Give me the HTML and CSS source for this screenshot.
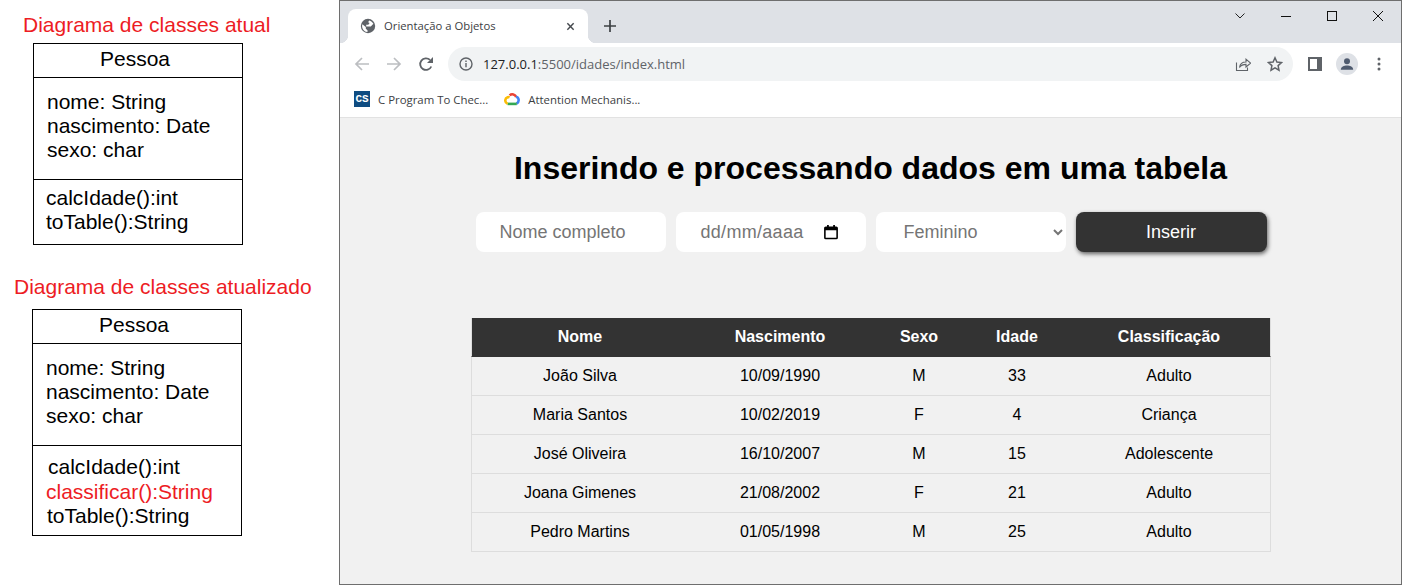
FILE: index.html
```html
<!DOCTYPE html>
<html lang="pt-BR">
<head>
    <meta charset="utf-8">
    <title>Orientação a Objetos</title>
    <link rel="stylesheet" href="styles.css">
</head>

<body>
    <aside class="diagrams">
        <h2 class="diagram-title first">Diagrama de classes atual</h2>
        <div class="uml first">
            <div class="uml-name">Pessoa</div>
            <div class="uml-attrs">
                <div>nome: String</div>
                <div>nascimento: Date</div>
                <div>sexo: char</div>
            </div>
            <div class="uml-methods">
                <div>calcIdade():int</div>
                <div>toTable():String</div>
            </div>
        </div>

        <h2 class="diagram-title second">Diagrama de classes atualizado</h2>
        <div class="uml second">
            <div class="uml-name">Pessoa</div>
            <div class="uml-attrs">
                <div>nome: String</div>
                <div>nascimento: Date</div>
                <div>sexo: char</div>
            </div>
            <div class="uml-methods updated">
                <div class="m-calc">calcIdade():int</div>
                <div class="m-new">classificar():String</div>
                <div class="m-table">toTable():String</div>
            </div>
        </div>
    </aside>

    <div class="browser">
        <div class="tabstrip">
            <div class="tab">
                <svg class="favicon" viewBox="0 0 16 16">
                    <circle cx="8" cy="8" r="7.2" fill="#5f6368"/>
                    <path d="M2.300 6.300 5.800 9v1.800l1.700 1.500v1.800C5 13.800 3.100 12.300 2.300 9.700c-.3-1.200-.3-2.300 0-3.400z" fill="#fff"/>
                    <path d="M9.200 2.400c1.900.5 3.300 1.700 4.200 3.400L10.800 8.600H6.200V6.800h2.100l1.300-1.700-1.500-.8z" fill="#fff"/>
                </svg>
                <span class="tab-title">Orientação a Objetos</span>
                <svg class="tab-close" viewBox="0 0 10 10"><path d="M1.500 1.500l7 7M8.500 1.500l-7 7" stroke="#45494e" stroke-width="1.600" fill="none"/></svg>
            </div>
            <div class="new-tab">
                <svg viewBox="0 0 12 12" width="12" height="12"><path d="M6 0v12M0 6h12" stroke="#3c4043" stroke-width="1.700" fill="none"/></svg>
            </div>
            <div class="window-controls">
                <div class="win-btn"><svg viewBox="0 0 10 6" width="10" height="6"><path d="M.5.500 5 5 9.500.500" stroke="#222" fill="none"/></svg></div>
                <div class="win-btn"><svg viewBox="0 0 10 10" width="10" height="10"><path d="M0 5.500h10" stroke="#111" fill="none"/></svg></div>
                <div class="win-btn"><svg viewBox="0 0 10 10" width="10" height="10"><rect x=".5" y=".5" width="9" height="9" stroke="#111" fill="none"/></svg></div>
                <div class="win-btn"><svg viewBox="0 0 10 10" width="10" height="10"><path d="M0 0l10 10M10 0 0 10" stroke="#111" fill="none"/></svg></div>
            </div>
        </div>

        <div class="toolbar">
            <div class="tool-btn"><svg viewBox="0 0 16 16" width="16" height="16"><path d="M15 8H2M8 2 2 8l6 6" stroke="#bcbec1" stroke-width="1.700" fill="none"/></svg></div>
            <div class="tool-btn"><svg viewBox="0 0 16 16" width="16" height="16"><path d="M1 8h13M8 2l6 6-6 6" stroke="#bcbec1" stroke-width="1.700" fill="none"/></svg></div>
            <div class="tool-btn"><svg viewBox="0 0 16 16" width="16" height="16"><path d="M13.300 10.500A5.800 5.800 0 1 1 12 3.900" stroke="#5f6368" stroke-width="1.800" fill="none"/><path d="M15 1v6H9z" fill="#5f6368"/></svg></div>
            <div class="omnibox">
                <svg class="info" viewBox="0 0 14 14" width="14" height="14"><circle cx="7" cy="7" r="6" stroke="#5f6368" stroke-width="1.400" fill="none"/><path d="M6.300 6h1.400v4.300H6.300zM6.300 3.500h1.400v1.400H6.300z" fill="#5f6368"/></svg>
                <span class="url"><span class="url-host">127.0.0.1</span>:5500/idades/index.html</span>
                <div class="omni-btn"><svg viewBox="0 0 16 16" width="16" height="16"><path d="M1.500 6.500v8h11v-3" stroke="#5f6368" stroke-width="1.100" fill="none"/><path d="M4.500 11.500c.5-3.500 3-5.500 6.500-5.500V3.200l4.500 3.900-4.500 3.900V8.400c-2.700 0-4.900.8-6.500 3.100z" stroke="#5f6368" stroke-width="1.100" fill="none"/></svg></div>
                <div class="omni-btn"><svg viewBox="0 0 16 16" width="16" height="16"><path d="M8 1.800l1.900 4.200 4.600.5-3.400 3.100.9 4.600L8 11.900l-4 2.300.9-4.600L1.500 6.500 6.100 6z" stroke="#5f6368" stroke-width="1.500" fill="none"/></svg></div>
            </div>
            <div class="tool-btn side-panel"><svg viewBox="0 0 14 14" width="14" height="14"><path d="M0 0h14v14H0z" fill="#5f6368"/><path d="M2 2h7v10H2z" fill="#fff"/></svg></div>
            <div class="tool-btn">
                <div class="avatar">
                    <svg viewBox="0 0 14 14" width="14" height="14"><circle cx="7" cy="4.300" r="3" fill="#4f5b6f"/><path d="M.8 12.800c0-3 3.300-4.200 6.200-4.200s6.200 1.200 6.200 4.200z" fill="#4f5b6f"/></svg>
                </div>
            </div>
            <div class="tool-btn"><svg viewBox="0 0 4 14" width="4" height="14"><circle cx="2" cy="2" r="1.500" fill="#5f6368"/><circle cx="2" cy="7" r="1.500" fill="#5f6368"/><circle cx="2" cy="12" r="1.500" fill="#5f6368"/></svg></div>
        </div>

        <div class="bookmarks">
            <div class="bookmark first">
                <span class="cs-icon">CS</span>
                <span>C Program To Chec...</span>
            </div>
            <div class="bookmark">
                <svg viewBox="0 0 16 14" width="16" height="14">
                    <path d="M5.600 3.400A4.100 4.100 0 0 1 12.200 5" stroke="#ea4335" stroke-width="2.600" fill="none"/>
                    <path d="M12 4.800c2.900.6 3.900 4.800.6 6.900" stroke="#4285f4" stroke-width="2.600" fill="none"/>
                    <path d="M3.500 11.900h9.300" stroke="#34a853" stroke-width="2.600" fill="none"/>
                    <path d="M3.600 11.900C.5 10.700.500 6.300 3.600 5.300c.7-.2 1.300-.2 2 .1" stroke="#fbbc05" stroke-width="2.600" fill="none"/>
                </svg>
                <span>Attention Mechanis...</span>
            </div>
        </div>

        <main class="content">
            <h1 class="header">Inserindo e processando dados em uma tabela</h1>

            <form class="person-form">
                <input class="field" type="text" placeholder="Nome completo">
                <div class="field date-field">
                    <span>dd/mm/aaaa</span>
                    <svg viewBox="0 0 16 18" width="14" height="16"><path d="M1 4.500a1 1 0 0 1 1-1h12a1 1 0 0 1 1 1v11a1 1 0 0 1-1 1H2a1 1 0 0 1-1-1z" stroke="#000" stroke-width="1.800" fill="none"/><path d="M1 4h14v3H1zM3.500 1h2v3h-2zM10.500 1h2v3h-2z" fill="#000"/></svg>
                </div>
                <select class="field sex-field">
                    <option>Feminino</option>
                    <option>Masculino</option>
                </select>
                <button class="insert-btn" type="button">Inserir</button>
            </form>

            <table id="people-table">
                <thead>
                    <tr>
                        <td class="col-name">Nome</td>
                        <td class="col-birth">Nascimento</td>
                        <td class="col-sex">Sexo</td>
                        <td class="col-age">Idade</td>
                        <td class="col-class">Classificação</td>
                    </tr>
                </thead>
                <tbody>
                    <tr><td>João Silva</td><td>10/09/1990</td><td>M</td><td>33</td><td>Adulto</td></tr>
                    <tr><td>Maria Santos</td><td>10/02/2019</td><td>F</td><td>4</td><td>Criança</td></tr>
                    <tr><td>José Oliveira</td><td>16/10/2007</td><td>M</td><td>15</td><td>Adolescente</td></tr>
                    <tr><td>Joana Gimenes</td><td>21/08/2002</td><td>F</td><td>21</td><td>Adulto</td></tr>
                    <tr><td>Pedro Martins</td><td>01/05/1998</td><td>M</td><td>25</td><td>Adulto</td></tr>
                </tbody>
            </table>
        </main>
    </div>
</body>
</html>
```

FILE: styles.css
```css
* {
    box-sizing: border-box;
}

html, body {
    height: 100%;
}

body {
    display: flex;
    margin: 0;
    overflow: hidden;
    background: #fff;
    font-family: "Liberation Sans", Arial, sans-serif;
    color: #000;
}

/* diagrams on the left */
.diagrams {
    flex: 0 0 339px;
    padding-top: 13px;
    font-size: 21px;
}

.diagram-title {
    margin: 0;
    font-size: 21px;
    font-weight: normal;
    line-height: 23px;
    color: #ed1c24;
}
.diagram-title.first {
    padding-left: 23px;
}
.diagram-title.second {
    margin-top: 30px;
    padding-left: 14px;
}

.uml {
    width: 210px;
    margin-top: 7px;
    border: 1px solid #000;
    line-height: 24px;
}
.uml.first {
    margin-left: 33px;
}
.uml.second {
    margin-left: 32px;
    margin-top: 11px;
}

.uml-name {
    height: 34px;
    padding: 3px 6px 0 0;
    text-align: center;
    border-bottom: 1px solid #000;
}

.uml-attrs {
    height: 102px;
    padding: 12px 0 0 13px;
    border-bottom: 1px solid #000;
}

.uml-methods {
    height: 64px;
    padding: 6px 0 0 12px;
}
.uml-methods.updated {
    height: 89px;
    padding: 9px 0 0 0;
}
.m-calc {
    padding-left: 15px;
}
.m-new {
    padding-left: 13px;
    margin-top: 1px;
    color: #ed1c24;
}
.m-table {
    padding-left: 14px;
}

/* browser window */
.browser {
    flex: 1;
    display: flex;
    flex-direction: column;
    min-width: 0;
    border: 1px solid #6e6e6e;
    font-family: "Open Sans", "Liberation Sans", sans-serif;
}

.tabstrip {
    display: flex;
    flex: 0 0 42px;
    padding-left: 8px;
    background: #dee1e6;
}

.tab {
    position: relative;
    display: flex;
    align-items: center;
    width: 240px;
    height: 34px;
    margin-top: 8px;
    padding: 0 12px;
    background: #fff;
    border-radius: 8px 8px 0 0;
}
.tab::before,
.tab::after {
    content: "";
    position: absolute;
    bottom: 0;
    width: 8px;
    height: 8px;
}
.tab::before {
    left: -8px;
    background: radial-gradient(circle at 0 0, #dee1e6 8px, #fff 8.5px);
}
.tab::after {
    right: -8px;
    background: radial-gradient(circle at 100% 0, #dee1e6 8px, #fff 8.5px);
}

.favicon {
    flex: none;
    width: 16px;
    height: 16px;
}

.tab-title {
    flex: 1;
    margin: 0 0 2px 8px;
    font-size: 11.3px;
    color: #3c4043;
    white-space: nowrap;
}

.tab-close {
    flex: none;
    width: 9px;
    height: 9px;
    margin-right: 1px;
}

.new-tab {
    display: flex;
    align-items: center;
    justify-content: center;
    width: 28px;
    height: 34px;
    margin: 8px 0 0 8px;
}

.window-controls {
    display: flex;
    margin-left: auto;
}

.win-btn {
    display: flex;
    align-items: center;
    justify-content: center;
    width: 46px;
    height: 30px;
}

.toolbar {
    display: flex;
    flex: 0 0 38px;
    padding: 4px 6px 0;
    background: #fff;
}

.tool-btn {
    display: flex;
    align-items: center;
    justify-content: center;
    flex: none;
    width: 32px;
    height: 34px;
}
.tool-btn.side-panel {
    margin-left: 6px;
}

.avatar {
    display: flex;
    align-items: center;
    justify-content: center;
    width: 22px;
    height: 22px;
    border-radius: 50%;
    background: #dee1e6;
}

.omnibox {
    display: flex;
    align-items: center;
    flex: 1;
    height: 34px;
    margin-left: 6px;
    padding: 0 2px 0 11px;
    border-radius: 17px;
    background: #f1f3f4;
}

.info {
    flex: none;
}

.url {
    flex: 1;
    margin-left: 10px;
    font-size: 13px;
    color: #5f6368;
    white-space: nowrap;
}
.url-host {
    color: #202124;
}

.omni-btn {
    display: flex;
    align-items: center;
    justify-content: center;
    width: 32px;
    height: 32px;
}

.bookmarks {
    display: flex;
    align-items: center;
    flex: 0 0 37px;
    padding-left: 14px;
    background: #fff;
    border-bottom: 1px solid #e2e2e2;
    font-size: 11.4px;
    color: #3c4043;
}

.bookmark {
    display: flex;
    align-items: center;
    gap: 8px;
}
.bookmark.first {
    margin-right: 16px;
}

.cs-icon {
    display: flex;
    align-items: center;
    justify-content: center;
    width: 16px;
    height: 16px;
    background: #0f4c81;
    color: #fff;
    font-family: "Liberation Mono", monospace;
    font-size: 11px;
    font-weight: bold;
}

/* page inside the browser */
.content {
    flex: 1;
    display: flex;
    flex-direction: column;
    align-items: center;
    padding-top: 32px;
    background: #f1f1f1;
    font-family: "Liberation Sans", Arial, sans-serif;
}

.header {
    margin: 0;
    font-size: 32px;
    line-height: 37px;
    font-weight: bold;
    color: #000;
}

.person-form {
    display: flex;
    gap: 10px;
    margin: 25px 0 0 1px;
}

.field {
    width: 190px;
    height: 40px;
    padding: 0 24px;
    border: 0;
    border-radius: 8px;
    background: #fff;
    font-family: inherit;
    font-size: 18px;
    color: #757575;
    outline: none;
}
.field::placeholder {
    color: #757575;
}

.date-field {
    display: flex;
    align-items: center;
    justify-content: space-between;
    padding: 0 28px 0 25px;
    letter-spacing: 0.3px;
}

.sex-field {
    padding-right: 8px;
}

.insert-btn {
    width: 191px;
    height: 40px;
    border: 0;
    border-radius: 8px;
    background: #333;
    box-shadow: 1px 2px 4px rgba(0, 0, 0, 0.6);
    font-family: inherit;
    font-size: 18px;
    color: #fff;
}

#people-table {
    width: 800px;
    margin: 66px 0 0 1px;
    border-collapse: separate;
    border-spacing: 0;
    table-layout: fixed;
    font-size: 16px;
    text-align: center;
}
#people-table td {
    height: 39px;
    padding: 0;
    border-bottom: 1px solid #ddd;
}
#people-table tr td:first-child {
    border-left: 1px solid #ddd;
}
#people-table tr td:last-child {
    border-right: 1px solid #ddd;
}
#people-table thead td {
    background: #333;
    border-bottom-color: #333;
    color: #fff;
    font-weight: bold;
}

.col-name { width: 217px; }
.col-birth { width: 184px; }
.col-sex { width: 94px; }
.col-age { width: 102px; }
.col-class { width: 203px; }
```
